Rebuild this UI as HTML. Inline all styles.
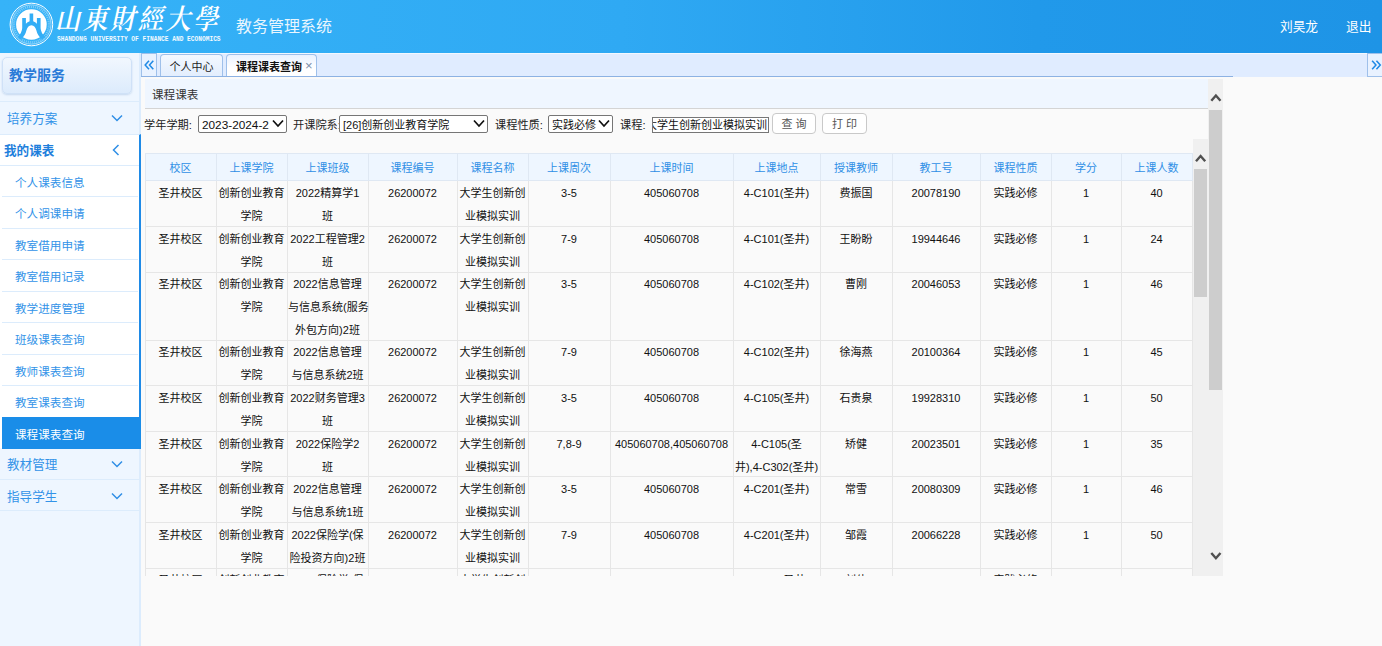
<!DOCTYPE html>
<html lang="zh-CN">
<head>
<meta charset="utf-8">
<title>教务管理系统</title>
<style>
*{box-sizing:border-box;margin:0;padding:0}
html,body{width:1382px;height:646px;overflow:hidden}
body{font-family:"Liberation Sans","Noto Sans CJK SC",sans-serif;font-size:12px;color:#000;background:#fafafa;position:relative}
/* header */
#hd{position:absolute;left:0;top:0;width:1382px;height:53px;background:linear-gradient(90deg,#36b3f8 0%,#2fa9f3 45%,#2199ea 75%,#1e94e6 100%)}
#emblem{position:absolute;left:8px;top:1px;width:47px;height:47px}
#cal{position:absolute;left:55px;top:0px;width:168px;height:40px;font-family:"Liberation Serif","Noto Serif CJK SC",serif;font-weight:600;font-style:italic;font-size:25px;letter-spacing:2.600px;color:#fff;white-space:nowrap;line-height:40px;transform-origin:0 50%;transform:scaleY(1.12)}
#eng{position:absolute;left:57px;top:34px;width:190px;font-family:"Liberation Mono",monospace;font-weight:bold;font-size:7px;line-height:10px;color:#f2faff;white-space:nowrap;transform-origin:0 0;transform:scaleX(.885);letter-spacing:0}
#sys{position:absolute;left:236px;top:15px;font-size:16px;line-height:24px;color:#e9f6fe;white-space:nowrap}
#usr{position:absolute;left:1280px;top:16.500px;font-size:12.700px;line-height:20px;color:#fff;white-space:nowrap}
#out{position:absolute;left:1346px;top:16.500px;font-size:12.700px;line-height:20px;color:#fff;white-space:nowrap}
/* sidebar */
#sb{position:absolute;left:0;top:53px;width:141px;height:593px;background:#eef6ff;border-right:2px solid #dcecfd}
#sbt{position:absolute;left:2px;top:5px;width:130px;height:37px;border:1px solid #cfe1f7;border-radius:5px;background:linear-gradient(#f1f7fe,#dcebfc);box-shadow:0 1px 2px rgba(120,160,210,.35);font-size:14px;font-weight:bold;color:#2a7bd8;line-height:35px;padding-left:6px}
.m1{position:absolute;left:0;width:140px;height:32px;border-top:1px solid #dcecfc;font-size:12.6px;color:#3293e8;line-height:34px;padding-left:7px;overflow:hidden}
.m1 svg{position:absolute;left:111px;top:12px}
#open{position:absolute;left:0;top:82px;width:141px;height:314px;background:#fff;border-right:2px solid #1f8ae6;border-top:1px solid #dcecfc}
.m2{position:absolute;left:2px;width:136px;height:32px;border-top:1px solid #dcecfc;font-size:11.6px;color:#3293e8;line-height:33px;padding-left:13px;overflow:hidden}
.m2.cur{background:#1a8de8;color:#fff;width:139px;border-top-color:#1a8de8}
/* tabs */
#tabs{position:absolute;left:141px;top:53px;width:1241px;height:24px;background:#e0ecff;border-top:1px solid #f3f8ff}
#tabline{position:absolute;left:141px;top:76px;width:1092px;height:1px;background:#8db2e3}
.tb{position:absolute;top:0;height:22px;border:1px solid #9fc0ea;border-bottom:none;border-radius:4px 4px 0 0;background:linear-gradient(#f3f8ff,#e3eefd);font-size:11px;line-height:24px;text-align:center;white-space:nowrap;color:#222}
.tb.act{background:linear-gradient(#eaf2ff,#fff 60%);height:23px;font-weight:bold;color:#111}
.nav{position:absolute;top:-1px;width:16px;height:24px;border:1px solid #9fc0ea;background:#e9f2ff;color:#1f8ae6}
/* panel */
#ptitle{position:absolute;left:145px;top:79px;width:1064px;height:30px;background:#eff6ff;border-bottom:1px solid #d4d4d4;font-size:11.6px;line-height:31px;padding-left:7px;color:#333;overflow:hidden}
#form{position:absolute;left:145px;top:116px;height:18px;font-size:11.200px;line-height:18px;white-space:nowrap;color:#222}
#form span{position:absolute;top:0}
.sel{position:absolute;top:-1px;height:18px;border:1px solid #767676;border-radius:2px;background:#fff;font-size:11px;line-height:19px;padding-left:3px;white-space:nowrap;overflow:hidden;color:#111}
.sel svg{position:absolute;right:2.500px;top:2.500px}
.btn{position:absolute;top:-3px;height:21px;border:1px solid #c9c9c9;border-radius:4px;background:#fff;font-size:11px;line-height:20px;text-align:center;color:#555}
/* table */
#tw{position:absolute;left:145px;top:153px;width:1048px;height:423px;overflow:hidden}
table{border-collapse:collapse;table-layout:fixed;width:1047px}
th,td{border:1px solid #e6e6e6;text-align:center;font-weight:normal;font-size:11px;vertical-align:top;padding:0 1px 0 0;white-space:nowrap}
th{height:27.400px;line-height:24.400px;padding-top:2px;background:#eef6ff;color:#2f8fe6;border-color:#dfe8f3}
td{line-height:23px;height:45.600px;padding-top:0;background:#fafafa;color:#111}
td div{height:0;overflow:visible;position:relative;top:.9px}
tr.t3 td{height:68px}
/* scrollbars */
.trk{position:absolute;width:15px;background:#f0f0f0}
.thumb{position:absolute;left:1px;width:13.400px;background:#cdcdcd}
</style>
</head>
<body>
<div id="hd">
  <svg id="emblem" viewBox="8 1 47 47">
    <circle cx="31.4" cy="24.5" r="21.3" fill="none" stroke="#fff" stroke-width="1"/>
    <circle cx="31.4" cy="24.5" r="19.6" fill="none" stroke="#e4f4fe" stroke-width="0.6"/>
    <circle cx="31.4" cy="24.5" r="17.6" fill="none" stroke="#bfe5fc" stroke-width="2.2" stroke-dasharray="1.1 0.9" opacity=".5"/>
    <circle cx="31.4" cy="24.5" r="15.3" fill="#fff"/>
    <path d="M29.600 13.400H33.200V21.300Q35.400 21.900 36.900 23.800V18H40.600V28Q40.800 33 45.200 36.800L42 39.500Q37.500 35.500 36.400 30.500Q35.300 25.800 31.400 25.200Q27.500 25.800 26.400 30.500Q25.300 35.500 20.800 39.500L17.600 36.800Q22 33 22.200 28V18H25.900V23.800Q27.400 21.900 29.600 21.300Z" fill="#33aef6"/>
  </svg>
  <div id="cal">山東財經大學</div>
  <div id="eng">SHANDONG UNIVERSITY OF FINANCE AND ECONOMICS</div>
  <div id="sys">教务管理系统</div>
  <div id="usr">刘昊龙</div>
  <div id="out">退出</div>
</div>

<div id="sb"><div style="position:absolute;left:0;top:-1px;width:140px;height:1px;overflow:visible">
  <div id="sbt">教学服务</div>
  <div class="m1" style="top:49px">培养方案<svg width="12" height="8" viewBox="0 0 12 8"><path d="M1 1.5l5 5 5-5" fill="none" stroke="#2f8fe6" stroke-width="1.5"/></svg></div>
  <div id="open">
    <div class="m1" style="top:-1px;font-weight:bold;color:#1f7fdc;border-top:none;padding-left:4px">我的课表<svg width="8" height="12" viewBox="0 0 8 12" style="left:112px;top:10px"><path d="M6.5 1L1.5 6l5 5" fill="none" stroke="#2f8fe6" stroke-width="1.5"/></svg></div>
    <div class="m2" style="top:30px;left:0;width:139px;padding-left:15px">个人课表信息</div>
    <div class="m2" style="top:61px">个人调课申请</div>
    <div class="m2" style="top:93px">教室借用申请</div>
    <div class="m2" style="top:124px">教室借用记录</div>
    <div class="m2" style="top:156px">教学进度管理</div>
    <div class="m2" style="top:187px">班级课表查询</div>
    <div class="m2" style="top:219px">教师课表查询</div>
    <div class="m2" style="top:250px">教室课表查询</div>
    <div class="m2 cur" style="top:282px">课程课表查询</div>
  </div>
  <div class="m1" style="top:396px;border-top:none">教材管理<svg width="12" height="8" viewBox="0 0 12 8"><path d="M1 1.5l5 5 5-5" fill="none" stroke="#2f8fe6" stroke-width="1.5"/></svg></div>
  <div class="m1" style="top:427px">指导学生<svg width="12" height="8" viewBox="0 0 12 8"><path d="M1 1.5l5 5 5-5" fill="none" stroke="#2f8fe6" stroke-width="1.5"/></svg></div>
  <div class="m1" style="top:458px;height:1px"></div>
</div></div>

<div id="tabs">
  <div class="nav" style="left:0"><svg width="14" height="22" viewBox="0 0 14 23"><path d="M7 7L3 11.500 7 16M11.500 7L7.500 11.500 11.500 16" fill="none" stroke="#1f8ae6" stroke-width="1.600"/></svg></div>
  <div class="tb" style="left:19px;width:63px">个人中心</div>
  <div class="tb act" style="left:85px;width:91px;text-align:left;padding-left:9px">课程课表查询<span style="font-weight:normal;color:#7d8ea8;font-size:13px;margin-left:3px;position:relative;top:-1px">×</span></div>
  <div class="nav" style="left:1226px;width:16px;border-right:none"><svg width="14" height="22" viewBox="0 0 14 23"><path d="M4 7L8 11.500 4 16M8.500 7L12.500 11.500 8.500 16" fill="none" stroke="#1f8ae6" stroke-width="1.600"/></svg></div>
</div>
<div id="tabline"></div>

<div id="ptitle">课程课表</div>
<div id="form">
  <span style="left:-1px">学年学期:</span>
  <div class="sel" style="left:53px;width:89px;font-size:11.8px">2023-2024-2<svg width="12" height="9" viewBox="0 0 12 9"><path d="M1 1.500l5 5.500 5-5.500" fill="none" stroke="#111" stroke-width="1.700"/></svg></div>
  <span style="left:148px">开课院系:</span>
  <div class="sel" style="left:194px;width:149px">[26]创新创业教育学院<svg width="12" height="9" viewBox="0 0 12 9"><path d="M1 1.500l5 5.500 5-5.500" fill="none" stroke="#111" stroke-width="1.700"/></svg></div>
  <span style="left:350px">课程性质:</span>
  <div class="sel" style="left:403px;width:65px">实践必修<svg width="12" height="9" viewBox="0 0 12 9"><path d="M1 1.500l5 5.500 5-5.500" fill="none" stroke="#111" stroke-width="1.700"/></svg></div>
  <span style="left:475px">课程:</span>
  <div class="sel" style="left:507px;top:.500px;height:16px;line-height:15px;width:117px;border-radius:0;padding-left:0"><span style="left:-7px;position:absolute">大学生创新创业模拟实训</span></div>
  <div class="btn" style="left:627px;width:44px">查 询</div>
  <div class="btn" style="left:677px;width:45px">打 印</div>
</div>

<div id="tw">
<table>
<colgroup><col style="width:71px"><col style="width:71px"><col style="width:81px"><col style="width:89px"><col style="width:71px"><col style="width:82px"><col style="width:123px"><col style="width:87px"><col style="width:72px"><col style="width:88px"><col style="width:71px"><col style="width:70px"><col style="width:71px"></colgroup>
<tr><th>校区</th><th>上课学院</th><th>上课班级</th><th>课程编号</th><th>课程名称</th><th>上课周次</th><th>上课时间</th><th>上课地点</th><th>授课教师</th><th>教工号</th><th>课程性质</th><th>学分</th><th>上课人数</th></tr>
<tr><td><div>圣井校区</div></td><td><div>创新创业教育<br>学院</div></td><td><div>2022精算学1<br>班</div></td><td><div>26200072</div></td><td><div>大学生创新创<br>业模拟实训</div></td><td><div>3-5</div></td><td><div>405060708</div></td><td><div>4-C101(圣井)</div></td><td><div>费振国</div></td><td><div>20078190</div></td><td><div>实践必修</div></td><td><div>1</div></td><td><div>40</div></td></tr>
<tr><td><div>圣井校区</div></td><td><div>创新创业教育<br>学院</div></td><td><div>2022工程管理2<br>班</div></td><td><div>26200072</div></td><td><div>大学生创新创<br>业模拟实训</div></td><td><div>7-9</div></td><td><div>405060708</div></td><td><div>4-C101(圣井)</div></td><td><div>王盼盼</div></td><td><div>19944646</div></td><td><div>实践必修</div></td><td><div>1</div></td><td><div>24</div></td></tr>
<tr class="t3"><td><div>圣井校区</div></td><td><div>创新创业教育<br>学院</div></td><td><div>2022信息管理<br>与信息系统(服务<br>外包方向)2班</div></td><td><div>26200072</div></td><td><div>大学生创新创<br>业模拟实训</div></td><td><div>3-5</div></td><td><div>405060708</div></td><td><div>4-C102(圣井)</div></td><td><div>曹刚</div></td><td><div>20046053</div></td><td><div>实践必修</div></td><td><div>1</div></td><td><div>46</div></td></tr>
<tr><td><div>圣井校区</div></td><td><div>创新创业教育<br>学院</div></td><td><div>2022信息管理<br>与信息系统2班</div></td><td><div>26200072</div></td><td><div>大学生创新创<br>业模拟实训</div></td><td><div>7-9</div></td><td><div>405060708</div></td><td><div>4-C102(圣井)</div></td><td><div>徐海燕</div></td><td><div>20100364</div></td><td><div>实践必修</div></td><td><div>1</div></td><td><div>45</div></td></tr>
<tr><td><div>圣井校区</div></td><td><div>创新创业教育<br>学院</div></td><td><div>2022财务管理3<br>班</div></td><td><div>26200072</div></td><td><div>大学生创新创<br>业模拟实训</div></td><td><div>3-5</div></td><td><div>405060708</div></td><td><div>4-C105(圣井)</div></td><td><div>石贵泉</div></td><td><div>19928310</div></td><td><div>实践必修</div></td><td><div>1</div></td><td><div>50</div></td></tr>
<tr><td><div>圣井校区</div></td><td><div>创新创业教育<br>学院</div></td><td><div>2022保险学2<br>班</div></td><td><div>26200072</div></td><td><div>大学生创新创<br>业模拟实训</div></td><td><div>7,8-9</div></td><td><div>405060708,405060708</div></td><td><div>4-C105(圣<br>井),4-C302(圣井)</div></td><td><div>矫健</div></td><td><div>20023501</div></td><td><div>实践必修</div></td><td><div>1</div></td><td><div>35</div></td></tr>
<tr><td><div>圣井校区</div></td><td><div>创新创业教育<br>学院</div></td><td><div>2022信息管理<br>与信息系统1班</div></td><td><div>26200072</div></td><td><div>大学生创新创<br>业模拟实训</div></td><td><div>3-5</div></td><td><div>405060708</div></td><td><div>4-C201(圣井)</div></td><td><div>常雪</div></td><td><div>20080309</div></td><td><div>实践必修</div></td><td><div>1</div></td><td><div>46</div></td></tr>
<tr><td><div>圣井校区</div></td><td><div>创新创业教育<br>学院</div></td><td><div>2022保险学(保<br>险投资方向)2班</div></td><td><div>26200072</div></td><td><div>大学生创新创<br>业模拟实训</div></td><td><div>7-9</div></td><td><div>405060708</div></td><td><div>4-C201(圣井)</div></td><td><div>邹霞</div></td><td><div>20066228</div></td><td><div>实践必修</div></td><td><div>1</div></td><td><div>50</div></td></tr>
<tr><td><div>圣井校区</div></td><td><div>创新创业教育<br>学院</div></td><td><div>2022保险学(保<br>险投资方向)1班</div></td><td><div>26200072</div></td><td><div>大学生创新创<br>业模拟实训</div></td><td><div>3-5</div></td><td><div>405060708</div></td><td><div>4-C202(圣井)</div></td><td><div>刘伟</div></td><td><div>20066229</div></td><td><div>实践必修</div></td><td><div>1</div></td><td><div>48</div></td></tr>
</table>
</div>

<!-- inner scrollbar -->
<div class="trk" style="left:1193px;top:139px;height:437px">
  <svg width="15" height="30" viewBox="0 0 15 30" style="position:absolute;left:0;top:0"><path d="M3 22.200L7.600 17 12.200 22.200" fill="none" stroke="#505050" stroke-width="2.400"/></svg>
  <div class="thumb" style="top:30px;height:128px"></div>
</div>
<!-- outer scrollbar -->
<div class="trk" style="left:1208px;top:79px;height:497px">
  <svg width="15" height="30" viewBox="0 0 15 30" style="position:absolute;left:0;top:0"><path d="M3.300 21.700L7.900 16.500 12.500 21.700" fill="none" stroke="#505050" stroke-width="2.400"/></svg>
  <div class="thumb" style="top:31px;height:280px"></div>
  <svg width="15" height="30" viewBox="0 0 15 30" style="position:absolute;left:0;bottom:0"><path d="M3.300 7L7.900 12.200 12.500 7" fill="none" stroke="#505050" stroke-width="2.400"/></svg>
</div>
</body>
</html>
